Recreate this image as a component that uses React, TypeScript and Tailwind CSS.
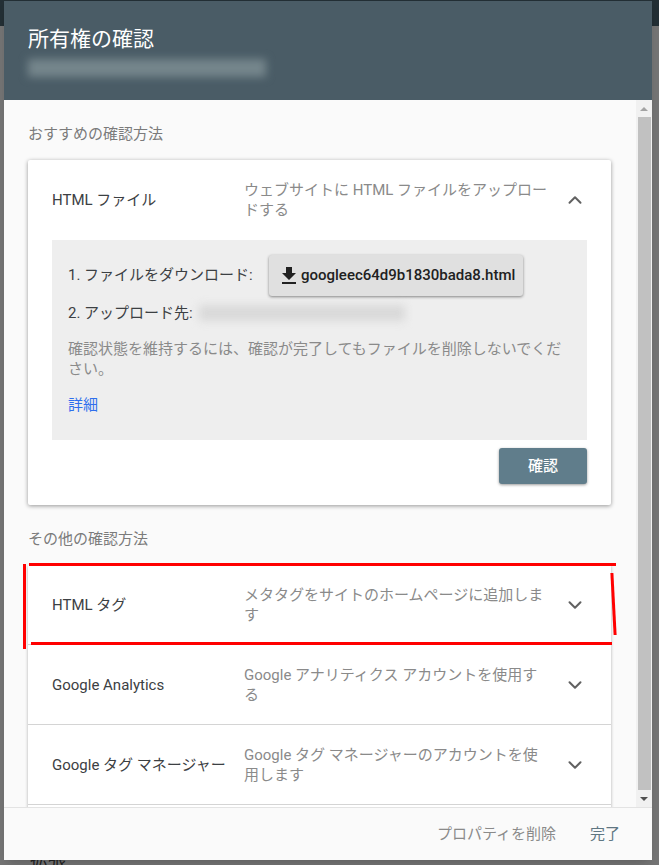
import { ChevronDown, ChevronUp } from "lucide-react"

const FONT = "[font-family:Roboto,'Noto_Sans_CJK_JP',sans-serif]"

const OTHER_METHODS = [
  { title: "HTML タグ", lines: ["メタタグをサイトのホームページに追加しま", "す"] },
  { title: "Google Analytics", lines: ["Google アナリティクス アカウントを使用す", "る"] },
  { title: "Google タグ マネージャー", lines: ["Google タグ マネージャーのアカウントを使", "用します"] },
]

function MethodHeader({ title, lines, open }: { title: string; lines: string[]; open?: boolean }) {
  return (
    <div className="flex h-[79px] items-center pl-6 pr-[24px]">
      <div className="w-[192px] shrink-0 whitespace-nowrap pt-[2px] text-[15px] text-[#3c4043]">{title}</div>
      <div className="w-[310px] shrink-0 text-[15px] leading-5 text-[#8a8a8a]">
        {lines.map((line) => (
          <div key={line} className="whitespace-nowrap">{line}</div>
        ))}
      </div>
      <div className="ml-[10px] text-[#616161]">
        {open ? <ChevronUp size={22} strokeWidth={2.2} /> : <ChevronDown size={22} strokeWidth={2.2} />}
      </div>
    </div>
  )
}

function DownloadIcon() {
  return (
    <svg width="24" height="24" viewBox="0 0 24 24" className="shrink-0 fill-[#212121]">
      <path d="M19 9h-4V3H9v6H5l7 7 7-7zM5 18v2h14v-2H5z" />
    </svg>
  )
}

function Scrollbar() {
  return (
    <div className="flex w-4 shrink-0 flex-col items-center bg-[#f1f1f1]">
      <div className="flex h-[17px] items-center justify-center">
        <div className="h-0 w-0 border-x-[4px] border-b-[4px] border-x-transparent border-b-[#a3a3a3]" />
      </div>
      <div className="ml-[1px] w-[13px] flex-1 bg-[#c1c1c1]" />
      <div className="flex h-[17px] items-center justify-center">
        <div className="h-0 w-0 border-x-[4px] border-t-[4px] border-x-transparent border-t-[#505050]" />
      </div>
    </div>
  )
}

export default function App() {
  return (
    <div className={`${FONT} relative h-[865px] w-[659px] overflow-hidden bg-[#757575]`}>
      <div className="h-[26px] bg-[#232f35]" />
      <div className="absolute bottom-[-9px] left-[30px] text-lg text-[#222]">拡張</div>

      <div className="absolute left-[4px] top-[1px] flex h-[859px] w-[648px] flex-col overflow-hidden bg-[#fafafa] shadow-lg">
        <div className="h-[99px] shrink-0 bg-[#4a5c66] pl-6 pt-[25px]">
          <div className="text-[21px] leading-[26px] text-white">所有権の確認</div>
          <div className="mt-[7px] h-[18px] w-[238px] bg-[#75868c] blur-[4px]" />
        </div>

        <div className="flex min-h-0 flex-1">
          <div className="min-w-0 flex-1 overflow-hidden pl-6">
            <div className="pb-[16px] pt-[24px] text-[15px] leading-5 text-[#7b7b7b]">おすすめの確認方法</div>

            <div className="w-[583px] rounded-[2px] bg-white shadow-[0_1px_4px_rgba(0,0,0,0.4)]">
              <div className="pb-[1px]">
                <MethodHeader
                  title="HTML ファイル"
                  lines={["ウェブサイトに HTML ファイルをアップロー", "ドする"]}
                  open
                />
              </div>
              <div className="mx-6 h-[200px] bg-[#eeeeee] px-4 pt-[15px] text-[15px] text-[#3c4043]">
                <div className="flex h-[41px] items-center">
                  <span className="w-[201px] whitespace-nowrap">1. ファイルをダウンロード:</span>
                  <button className="flex h-[41px] w-[254px] items-center rounded-[3px] bg-[#e0e0e0] pl-2 font-medium text-[#212121] shadow-[0_1px_3px_rgba(0,0,0,0.45)]">
                    <DownloadIcon />
                    googleec64d9b1830bada8.html
                  </button>
                </div>
                <div className="mt-[6px] flex h-[22px] items-center">
                  <span className="whitespace-nowrap">2. アップロード先:</span>
                  <span className="ml-[6px] h-[16px] w-[206px] bg-[#d9d9d9] blur-[4px]" />
                </div>
                <p className="mt-[15px] leading-[20px] text-[#8a8a8a]">
                  確認状態を維持するには、確認が完了してもファイルを削除しないでください。
                </p>
                <a className="mt-[16px] block leading-5 text-[#2f6fed]">詳細</a>
              </div>
              <div className="flex justify-end px-6 pb-[21px] pt-2">
                <button className="h-[36px] w-[88px] rounded-[3px] bg-[#607d8b] text-[15px] font-medium text-white shadow-[0_1px_3px_rgba(0,0,0,0.4)]">
                  確認
                </button>
              </div>
            </div>

            <div className="pb-[16px] pt-[24px] text-[15px] leading-5 text-[#7b7b7b]">その他の確認方法</div>

            <div className="w-[583px] bg-white shadow-[0_1px_3px_rgba(0,0,0,0.3)]">
              {OTHER_METHODS.map((method) => (
                <div key={method.title} className="border-b border-[#d4d4d4]">
                  <MethodHeader title={method.title} lines={method.lines} />
                </div>
              ))}
              <div className="h-10" />
            </div>
          </div>
          <Scrollbar />
        </div>

        <div className="relative flex h-[53px] shrink-0 items-center justify-end gap-[34px] border-t border-[#e3e3e3] bg-[#fafafa] pr-[32px] text-[15px]">
          <span className="text-[#8a8a8a]">プロパティを削除</span>
          <span className="text-[#5f7682]">完了</span>
        </div>
      </div>

      <div className="absolute left-[29px] top-[563px] h-[3px] w-[587px] bg-[#ff0000]" />
      <div className="absolute left-[31px] top-[642px] h-[3px] w-[581px] bg-[#ff0000]" />
      <div className="absolute left-[23px] top-[564px] h-[85px] w-[3px] bg-[#ff0000]" />
      <div className="absolute left-[612px] top-[573px] h-[62px] w-[3px] -rotate-[3deg] bg-[#ff0000]" />
    </div>
  )
}
